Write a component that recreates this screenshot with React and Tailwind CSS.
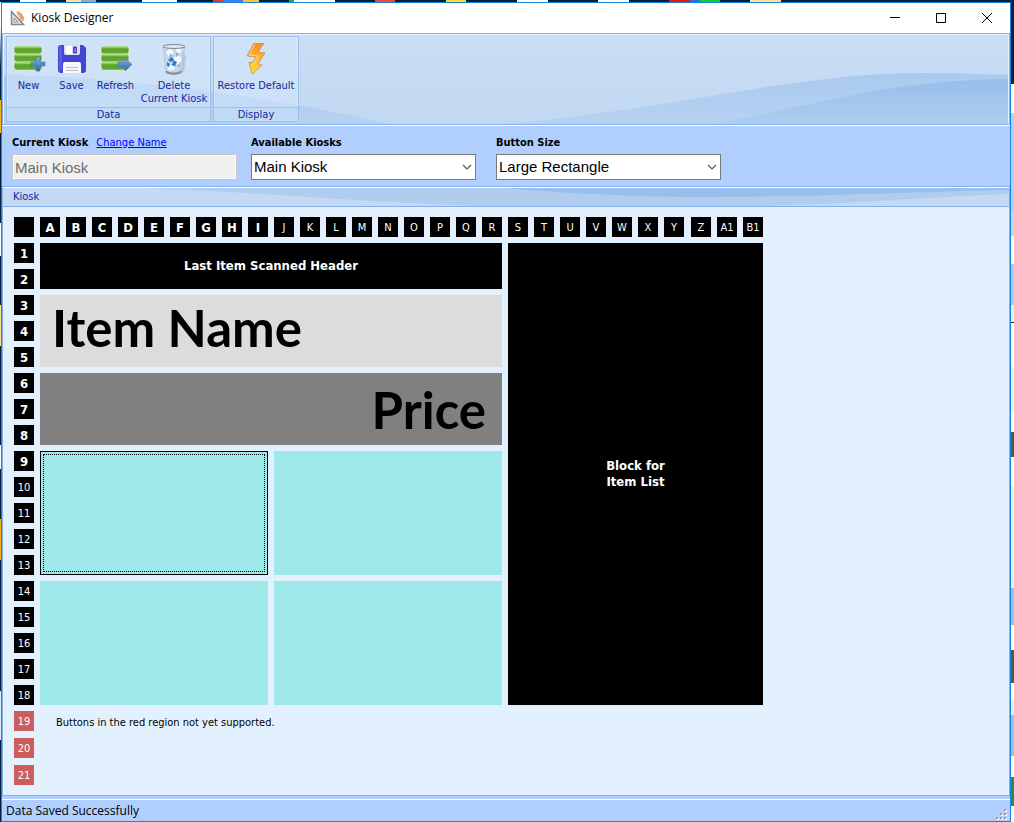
import React from "react";

const columns = [..."ABCDEFGHIJKLMNOPQRSTUVWXYZ", "A1", "B1"];
const rows = Array.from({ length: 21 }, (_, i) => i + 1);

function DesignerIcon() {
  return (
    <svg viewBox="0 0 16 16" className="size-4" aria-hidden="true">
      <path d="M6 2 9 1l5 6v4l-3 1Z" fill="#f5b68a" />
      <path d="m8 2 5 7M11 3l2 5" stroke="#e58d58" fill="none" />
      <path d="M1.5 1.5v13h12Z" fill="#e4e4e4" stroke="#85898c" strokeWidth="1.5" />
      <path d="M4 8v4h4Z" fill="#fff" stroke="#85898c" />
    </svg>
  );
}

function StackIcon({ kind }) {
  return (
    <svg viewBox="0 0 34 32" className="h-8 w-[34px]" aria-hidden="true">
      <defs>
        <linearGradient id={"stack" + kind} x2="0" y2="1">
          <stop offset="0" stopColor="#8bc957" />
          <stop offset=".45" stopColor="#5c9f2b" />
          <stop offset="1" stopColor="#6eb138" />
        </linearGradient>
        <linearGradient id={"mark" + kind} x2="0" y2="1">
          <stop offset="0" stopColor="#7fb2e8" />
          <stop offset="1" stopColor="#2f68ad" />
        </linearGradient>
      </defs>
      {[3, 11, 19].map((y) => (
        <g key={y}>
          <rect x="2" y={y} width="28" height="8" rx="2.5" fill={`url(#stack${kind})`} stroke="#e0f2cf" strokeWidth=".8" />
          <path d={`M4 ${y + 1.3}h24`} stroke="#9ad46d" />
          <path d={`M4 ${y + 7}h24`} stroke="#5a9a2c" strokeWidth=".7" />
        </g>
      ))}
      {kind === "new" ? (
        <path d="M24 14h4v5h5v4h-5v5h-4v-5h-5v-4h5Z" fill="url(#marknew)" stroke="#3c73b4" strokeWidth=".6" />
      ) : (
        <path d="M19 19h7v-4l7 6.5-7 6.500v-4h-7Z" fill="url(#markrefresh)" stroke="#4379ba" strokeWidth=".6" />
      )}
    </svg>
  );
}

function SaveIcon() {
  return (
    <svg viewBox="0 0 32 32" className="size-8" aria-hidden="true">
      <path d="M5 2h22l3 3v22a3 3 0 0 1-3 3H5a3 3 0 0 1-3-3V5a3 3 0 0 1 3-3Z" fill="#4545cf" />
      <path d="M3 6a3 3 0 0 1 3-3v25H5a2 2 0 0 1-2-2Z" fill="#6d6df0" opacity=".6" />
      <path d="M8 2h16v8a2 2 0 0 1-2 2H10a2 2 0 0 1-2-2Z" fill="#dcdff5" />
      <path d="M10 3h6v8h-6Z" fill="#fff" />
      <rect x="17" y="3.500" width="4" height="7" rx="1" fill="#4545bd" />
      <rect x="18.500" y="5" width="1.500" height="4" fill="#8d90e6" />
      <path d="M7 21a2 2 0 0 1 2-2h14a2 2 0 0 1 2 2v9H7Z" fill="#f7f7fc" />
      <path d="M10 24.500h12M10 27.500h12" stroke="#aab" strokeWidth=".8" />
    </svg>
  );
}

function BinIcon() {
  return (
    <svg viewBox="0 0 32 32" className="size-8" aria-hidden="true">
      <path d="M24 9 28 13 26 29 20 31Z" fill="#7b8795" opacity=".3" />
      <path d="M5 3 8 29q8 4 15 0L27 3Z" fill="#c4d6e8" stroke="#b4bdc8" strokeWidth=".8" />
      <path d="m8 9 5-4 3 5-5 4ZM15 15l6-3 3 5-5 5ZM9 23l5-3 3 6-6 2ZM18 5l6 1-2 5-4-1Z" fill="#f3f8fd" />
      <path d="m12 10 3 3-4 3ZM18 9l4 2-4 3ZM19 23l3-3v5Z" fill="#8fb5dd" />
      <path d="m10 17 4-3 2 3-3 2ZM15 17l4 2-2 4-4-1 2-2ZM9 19l3 2-1 3-2-1Z" fill="#2f78d2" />
      <ellipse cx="16" cy="3.500" rx="11" ry="2" fill="#e1e7ed" stroke="#87898c" />
      <path d="M8 28q8 4 15 0v2q-7 3-15 0Z" fill="#969ca2" stroke="#6f7376" strokeWidth=".5" />
    </svg>
  );
}

function BoltIcon() {
  return (
    <svg viewBox="0 0 32 32" className="size-8" aria-hidden="true">
      <defs>
        <linearGradient id="bolt" x2="0" y2="1">
          <stop offset="0" stopColor="#f58f1c" />
          <stop offset=".5" stopColor="#ffb43c" />
          <stop offset="1" stopColor="#ffe526" />
        </linearGradient>
      </defs>
      <path d="M14 0H24L18 9 25 10 18 21 22 22 12 31 9 19 12 20 16 14 7 13Z" fill="url(#bolt)" stroke="#c98730" strokeWidth=".7" />
      <path d="M15 1 9 12 18 13 13 22" fill="none" stroke="#ffe1a0" strokeWidth=".8" />
    </svg>
  );
}

function RibbonButton({ icon, children, className }) {
  return (
    <button type="button" className={"flex flex-col items-center gap-1 text-[11px] leading-[13px] " + className}>
      {icon}
      <span>{children}</span>
    </button>
  );
}

function RibbonGroup({ title, children }) {
  return (
    <section className="flex flex-col border border-[#9bbfea] bg-[#d5e8fc]/50 shadow-[inset_0_0_0_1px_rgba(225,240,255,0.5)]">
      <div className="flex flex-1 items-start pt-1.5">{children}</div>
      <h2 className="h-3.5 border-t border-[#9bbfea] bg-[#bdd8f5]/60 text-center text-[11px] leading-[14px]">{title}</h2>
    </section>
  );
}

function Picker({ id, label, value }) {
  return (
    <div className="flex w-[225px] flex-col gap-1">
      <label htmlFor={id} className="text-[11px] leading-[14px] font-bold">{label}</label>
      <div className="relative">
        <select id={id} defaultValue={value} className="block h-[26px] w-full appearance-none border border-[#7a7a7a] bg-white pr-6 pl-0.5 font-['Liberation_Sans',sans-serif] text-[15px]">
          <option>{value}</option>
        </select>
        <svg viewBox="0 0 10 6" className="pointer-events-none absolute top-2.5 right-1 h-1.5 w-2.5" aria-hidden="true">
          <path d="m1 1 4 4 4-4" fill="none" stroke="#555" strokeWidth="1.200" />
        </svg>
      </div>
    </div>
  );
}

function TitleBar() {
  return (
    <header className="flex h-[30px] items-center bg-white pl-2">
      <DesignerIcon />
      <h1 className="ml-[5px] flex-1 font-['Open_Sans',sans-serif] text-xs">Kiosk Designer</h1>
      <button type="button" aria-label="Minimize" className="flex h-full w-[46px] items-center justify-center">
        <svg viewBox="0 0 10 10" className="size-2.5"><path d="M0 4.500h10" stroke="#000" /></svg>
      </button>
      <button type="button" aria-label="Maximize" className="flex h-full w-[46px] items-center justify-center">
        <svg viewBox="0 0 10 10" className="size-2.5"><path d="M.5.5h9v9h-9Z" fill="none" stroke="#000" /></svg>
      </button>
      <button type="button" aria-label="Close" className="flex h-full w-[46px] items-center justify-center">
        <svg viewBox="0 0 10 10" className="size-2.5"><path d="m0 0 10 10M10 0 0 10" stroke="#000" /></svg>
      </button>
    </header>
  );
}

function Ribbon() {
  return (
    <nav className="relative border border-[#87b0e8] bg-[#c7dcf4] text-[#15289b]">
      <svg viewBox="0 0 1008 90" preserveAspectRatio="none" className="absolute inset-0 size-full" aria-hidden="true">
        <defs>
          <linearGradient id="sky" x2="0" y2="1"><stop offset="0" stopColor="#cadef5" /><stop offset="1" stopColor="#c1d8f2" /></linearGradient>
          <linearGradient id="mid" x2="0" y2="1"><stop offset="0" stopColor="#a9caef" /><stop offset="1" stopColor="#b6d2f1" /></linearGradient>
          <linearGradient id="deep" x2="0" y2="1"><stop offset="0" stopColor="#97bfeb" /><stop offset="1" stopColor="#adccf0" /></linearGradient>
        </defs>
        <path d="M0 0h1008v90H0Z" fill="url(#sky)" />
        <path d="M0 41C100 42 230 58 330 78L390 90H0Z" fill="url(#mid)" />
        <path d="M500 90C680 75 790 39 920 39Q970 39 1008 41V90Z" fill="url(#mid)" />
        <path d="M710 90C800 75 890 45 1008 45V90Z" fill="url(#deep)" />
      </svg>
      <div className="relative flex gap-0.5 border border-b-0 border-[#e5f1fd] px-0.5 pt-px pb-0.5">
        <RibbonGroup title="Data">
          <RibbonButton className="w-[43px]" icon={<StackIcon kind="new" />}>New</RibbonButton>
          <RibbonButton className="w-[43px]" icon={<SaveIcon />}>Save</RibbonButton>
          <RibbonButton className="w-[45px]" icon={<StackIcon kind="refresh" />}>Refresh</RibbonButton>
          <RibbonButton className="w-[72px] pb-0.5" icon={<BinIcon />}>Delete<br /><span className="whitespace-nowrap">Current Kiosk</span></RibbonButton>
        </RibbonGroup>
        <RibbonGroup title="Display">
          <RibbonButton className="w-[84px]" icon={<BoltIcon />}><span className="whitespace-nowrap">Restore Default</span></RibbonButton>
        </RibbonGroup>
      </div>
    </nav>
  );
}

function SettingsForm() {
  return (
    <form className="flex gap-5 border-t border-white px-2.5 pt-2.5 pb-1.5 text-black">
      <div className="-mr-1.5 flex w-[225px] flex-col gap-1">
        <div className="flex gap-2 text-[11px] leading-[14px] whitespace-nowrap">
          <label htmlFor="current" className="font-bold">Current Kiosk</label>
          <a href="#rename" className="text-[#0000ff] underline">Change Name</a>
        </div>
        <input id="current" disabled defaultValue="Main Kiosk" className="h-[26px] w-full border border-[#c8c8c8] bg-[#f0f0f0] pl-0.5 font-['Liberation_Sans',sans-serif] text-[15px] text-[#6d6d6d] shadow-[inset_0_0_0_1px_#fff]" />
      </div>
      <Picker id="available" label="Available Kiosks" value="Main Kiosk" />
      <Picker id="size" label="Button Size" value="Large Rectangle" />
    </form>
  );
}

function Board() {
  return (
    <div className="grid flex-1 content-start gap-1.5 px-[11px] pt-2.5 [grid-template-columns:repeat(25,20px)_21px_repeat(3,20px)] [grid-template-rows:repeat(19,20px)_21px_21px_20px]">
      <div className="col-start-1 row-start-1 bg-black" />
      {columns.map((name, i) => (
        <div key={name} style={{ gridColumn: i + 2, gridRow: 1 }} className={"h-5 w-5 bg-black text-center leading-[22px] text-white " + (i < 9 ? "text-[13px] font-bold" : "text-[11px]")}>{name}</div>
      ))}
      {rows.map((n) => (
        <div key={n} style={{ gridColumn: 1, gridRow: n + 1 }} className={"h-5 w-5 text-center leading-[22px] text-white " + (n < 10 ? "text-[13px] font-bold " : "text-[11px] ") + (n > 18 ? "bg-[#cd5c5c]" : "bg-black")}>{n}</div>
      ))}
      <button type="button" className="col-start-2 col-end-20 row-start-2 row-end-4 bg-black text-[13px] font-bold text-white">Last Item Scanned Header</button>
      <button type="button" className="col-start-2 col-end-20 row-start-4 row-end-7 bg-[#dcdcdc] px-3 pb-1.5 text-left font-['Lato',sans-serif] text-[51px] leading-[60px] font-bold">Item Name</button>
      <button type="button" className="col-start-2 col-end-20 row-start-7 row-end-10 bg-[#808080] px-4 pt-0.5 text-right font-['Lato',sans-serif] text-[51px] leading-[60px] font-bold">Price</button>
      <button type="button" aria-label="Kiosk button 1" className="col-start-2 col-end-11 row-start-10 row-end-15 border border-black bg-[#9fe8ea] p-0.5">
        <span className="block h-full border border-dotted border-black" />
      </button>
      <button type="button" aria-label="Kiosk button 2" className="col-start-11 col-end-20 row-start-10 row-end-15 bg-[#9fe8ea]" />
      <button type="button" aria-label="Kiosk button 3" className="col-start-2 col-end-11 row-start-15 row-end-20 bg-[#9fe8ea]" />
      <button type="button" aria-label="Kiosk button 4" className="col-start-11 col-end-20 row-start-15 row-end-20 bg-[#9fe8ea]" />
      <button type="button" className="col-start-20 col-end-30 row-start-2 row-end-20 bg-black text-[13px] leading-4 font-bold text-white">Block for<br />Item List</button>
      <p className="col-start-2 col-end-20 row-start-20 pl-4 text-[11px] leading-6">Buttons in the red region not yet supported.</p>
    </div>
  );
}

export default function App() {
  return (
    <div className="flex min-h-screen flex-col bg-[#04203f] font-['DejaVu_Sans_Condensed','DejaVu_Sans',sans-serif] text-black">
      <div className="h-0.5 bg-[linear-gradient(90deg,#04203f_2%,#fff_2%_4.500%,#04203f_4.500%_6.500%,#ffe49a_6.500%_8%,#9ab_8%_9.500%,#04203f_9.500%_14%,#fff_14%_17.500%,#04203f_17.500%_21%,#dc3a32_21%_22%,#3b82f6_22%_24%,#fbc530_24%_25.500%,#04203f_25.500%_28.500%,#13b54a_28.500%_29%,#fff_29%_33%,#04203f_33%_37%,#e44_37%_39%,#04203f_39%_44%,#fd3_44%_46%,#04203f_46%_51%,#fff_51%_54%,#04203f_54%_59%,#fff_59%_62%,#04203f_62%_66%,#e11_66%_68%,#2f6bea_68%_69%,#1c3_69%_71%,#04203f_71%_74%,#ffe49a_74%_77%,#04203f_77%)]" />
      <div className="flex flex-1">
        <div className="w-px bg-[linear-gradient(#fff_3%,#04203f_8%_12%,#fbb220_12%_16%,#04203f_16%_27%,#fff_27%_31%,#04203f_31%_37%,#ffe49a_37%_42%,#04203f_42%_54%,#fff_54%_57%,#04203f_57%_63%,#fbb220_63%_68%,#04203f_68%_84%,#d8edf5_84%_90%,#04203f_90%)]" />
        <main className="flex flex-1 flex-col border border-[#1883d7] bg-[#b0cfff]">
          <TitleBar />
          <Ribbon />
          <SettingsForm />
          <section className="flex flex-1 flex-col border border-[#87b0e8] bg-[#e3f1ff]">
            <div className="relative border-t border-b border-t-white border-b-[#87b0e8] bg-[#c4daf4]">
              <svg viewBox="0 0 1008 18" preserveAspectRatio="none" className="absolute inset-0 size-full" aria-hidden="true">
                <path d="M140 0C260 4 350 14 480 18H760C850 16 930 9 1008 6V0Z" fill="#b0cdf0" />
                <path d="M500 0C590 7 650 9 700 9C820 9 900 4 1008 2V0Z" fill="#98bfeb" />
              </svg>
              <h2 className="relative pl-2.5 text-[11px] leading-[18px] text-[#15289b]">Kiosk</h2>
            </div>
            <Board />
          </section>
          <footer className="mt-[3px] flex items-center justify-between border-t border-white pr-0.5 pl-1 font-['Open_Sans',sans-serif] text-xs leading-[21px]">
            <span>Data Saved Successfully</span>
            <svg viewBox="0 0 12 12" className="size-3 self-end" aria-hidden="true">
              {[[8, 0], [4, 4], [8, 4], [0, 8], [4, 8], [8, 8]].map(([x, y]) => (
                <g key={`${x}-${y}`}>
                  <rect x={x + 1} y={y + 1} width="2" height="2" fill="#fff" />
                  <rect x={x} y={y} width="2" height="2" fill="#9b9b9b" />
                </g>
              ))}
            </svg>
          </footer>
        </main>
        <div className="w-[3px] bg-[linear-gradient(#04203f_10%,#fff_10%_13.500%,#b0cfff_13.500%_25.500%,#bfd7f3_25.500%_28.500%,#fff_28.500%_32%,#a8c9fb_32%_37%,#e3f1ff_37%_39%,#222_39%_39.200%,#fff_39.200%_44.500%,#e3f1ff_44.500%_50%,#fff_50%_52.500%,#555_52.500%_55.500%,#fff_55.500%_59%,#e3f1ff_59%_71.500%,#98bcf0_71.500%_76%,#fff_76%_79%,#555_79%_83%,#fff_83%_85%,#e3f1ff_85%_87%,#98bcf0_87%_92%,#fff_92%_94.500%,#2f8c48_94.500%_98%,#fff_98%)]" />
      </div>
    </div>
  );
}
